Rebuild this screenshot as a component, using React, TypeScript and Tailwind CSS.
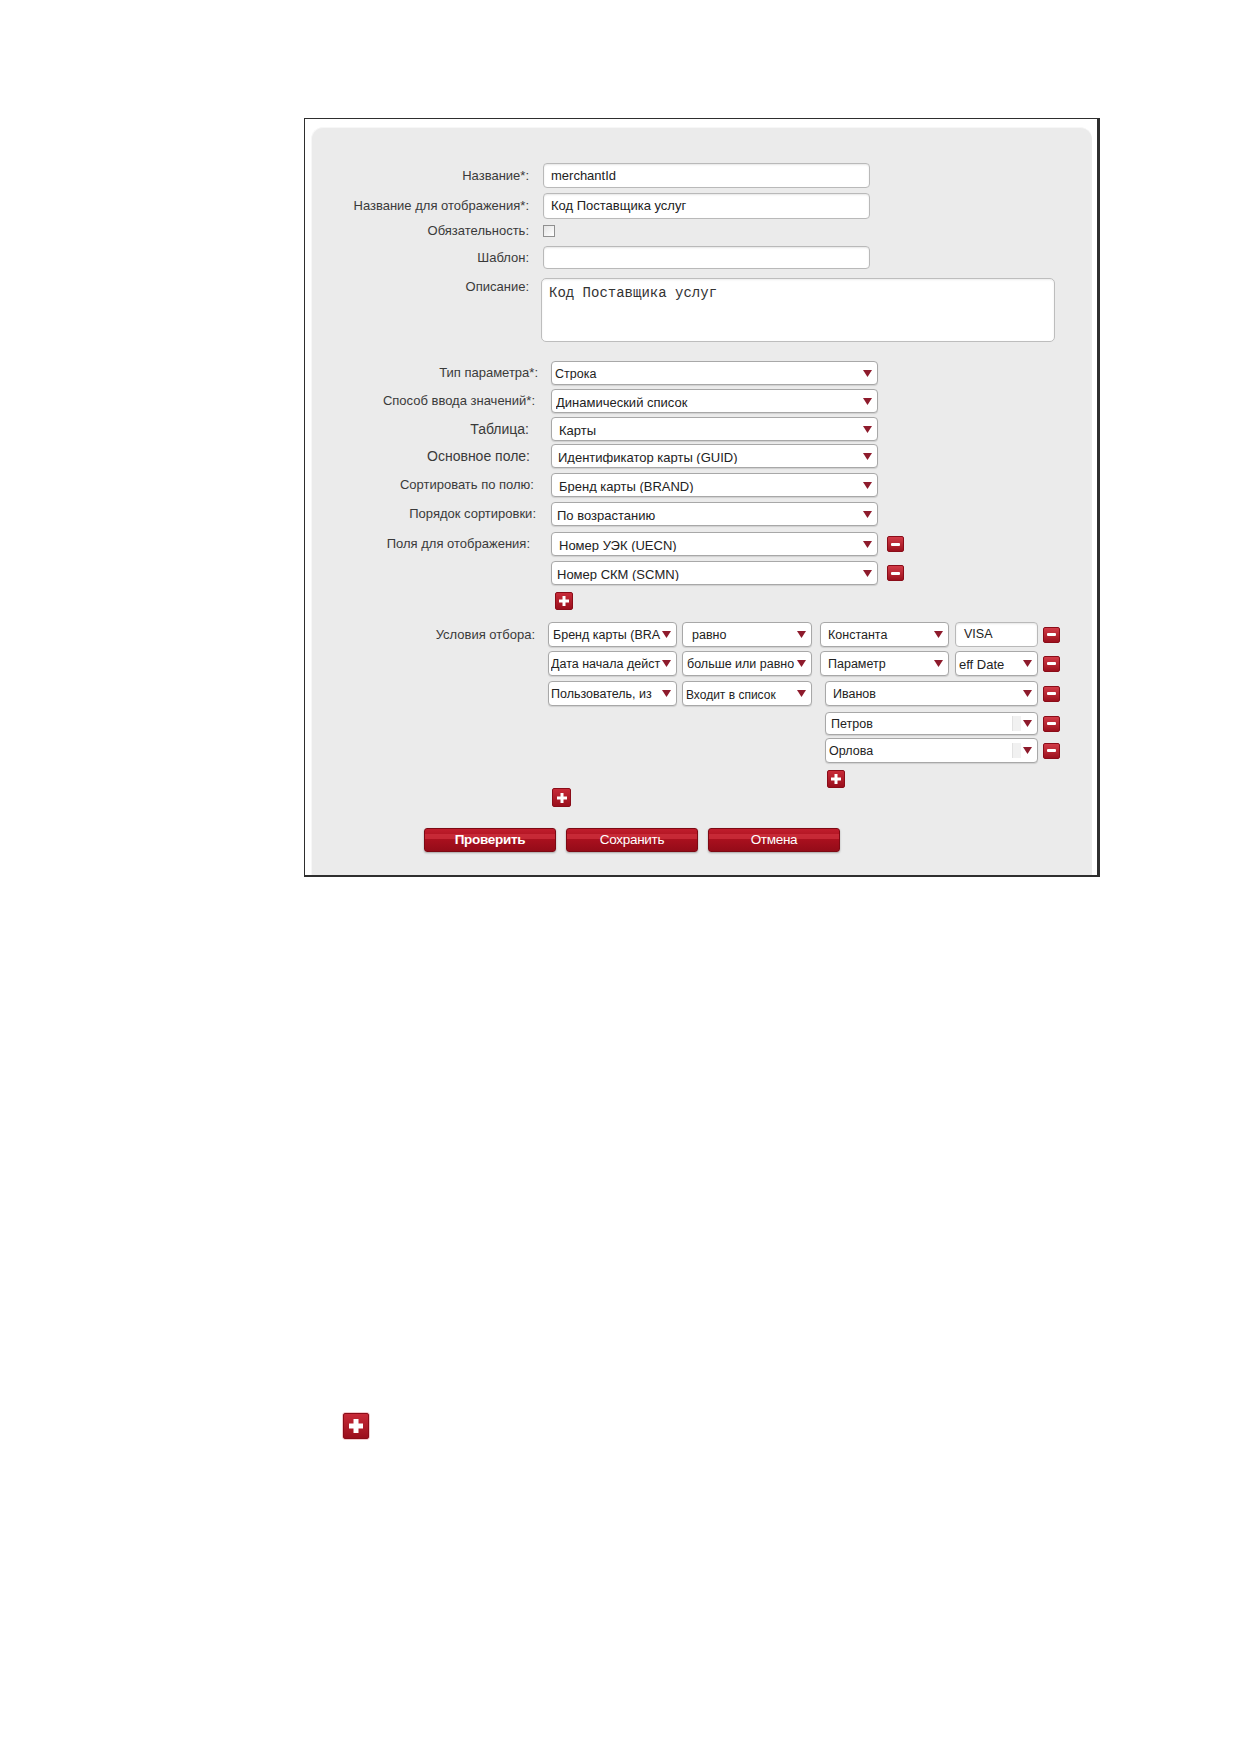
import React from 'react'

const font = "font-['Liberation_Sans',Arial,sans-serif]"

function Arrow() {
  return (
    <svg width="9" height="7" viewBox="0 0 9 7" className="shrink-0">
      <path d="M0 0 H9 L4.5 7 Z" fill="#8e1b2c" />
    </svg>
  )
}

function Select({ value, w, h = 24, pl = 4, text = 'text-[13px]', scroll = false }: { value: string; w: number; h?: number; pl?: number; text?: string; scroll?: boolean }) {
  return (
    <div
      className={`flex items-center bg-white border border-[#a8a8a8] rounded-[4px] shadow-[0_1px_1px_rgba(0,0,0,0.12)] pr-[5px] ${text} text-[#222]`}
      style={{ width: w, height: h, paddingLeft: pl }}
    >
      <span className="flex-1 min-w-0 overflow-hidden whitespace-nowrap leading-none pt-[2px]">{value}</span>
      {scroll && <span className="w-[9px] h-[15px] bg-[#f1f1f1] border-l border-[#e2e2e2] mr-[2px]" />}
      <Arrow />
    </div>
  )
}

function Input({ value = '', w, h = 25, pl = 7, text = 'text-[13px]' }: { value?: string; w: number; h?: number; pl?: number; text?: string }) {
  return (
    <div
      className={`flex items-center bg-white border border-[#b9b9b9] rounded-[4px] shadow-[inset_0_1px_2px_rgba(0,0,0,0.1)] ${text} text-[#222]`}
      style={{ width: w, height: h, paddingLeft: pl }}
    >
      {value}
    </div>
  )
}

function Minus() {
  return (
    <div className="w-[17px] h-[16px] shrink-0 rounded-[2px] bg-gradient-to-b from-[#d23a47] to-[#9c0f1d] border border-[#8a0c18] flex items-center justify-center">
      <span className="w-[9px] h-[3px] bg-white rounded-[1px]" />
    </div>
  )
}

function Plus({ size = 18, bar = 3, len = 10 }: { size?: number; bar?: number; len?: number }) {
  return (
    <div
      className="relative shrink-0 rounded-[2px] bg-gradient-to-b from-[#c82a38] to-[#9a0e1c] border border-[#8a0c18]"
      style={{ width: size, height: size }}
    >
      <span className="absolute bg-white left-1/2 top-1/2 -translate-x-1/2 -translate-y-1/2" style={{ width: len, height: bar }} />
      <span className="absolute bg-white left-1/2 top-1/2 -translate-x-1/2 -translate-y-1/2" style={{ width: bar, height: len }} />
    </div>
  )
}

function ActionButton({ label, bold = false }: { label: string; bold?: boolean }) {
  return (
    <div className="relative w-[132px] h-[24px] rounded-[3px] border border-[#7d0913] bg-gradient-to-b from-[#c01d2c] via-[#a8101e] to-[#940b18] shadow-[0_1px_2px_rgba(0,0,0,0.3)] flex items-center justify-center overflow-hidden">
      <span className="absolute left-0 right-0 top-[5px] h-[5px] bg-[#d0323f] opacity-70" />
      <span className={`relative text-white text-[13.5px] tracking-[-0.3px] ${bold ? 'font-bold' : ''}`}>{label}</span>
    </div>
  )
}

function Row({ label, lw, gap, h, mt, size = 'text-[13px]', children }: { label: string; lw: number; gap: number; h: number; mt: number; size?: string; children: React.ReactNode }) {
  return (
    <div className="flex items-center" style={{ height: h, marginTop: mt }}>
      <div className={`text-right text-[#3a3a3a] ${size} shrink-0 whitespace-nowrap`} style={{ width: lw, marginRight: gap }}>
        {label}
      </div>
      {children}
    </div>
  )
}

export default function App() {
  return (
    <div className={`w-[1239px] min-h-[1752px] bg-white ${font} overflow-hidden`}>
      <div className="ml-[304px] mt-[118px] w-[796px] h-[759px] border-l border-t border-r-[3px] border-b-[2px] border-[#2e2e2e] bg-white pt-[8px] pl-[6px] pr-[5px] flex">
        <div className="flex-1 bg-[#ebebeb] rounded-t-[12px] border-t border-l border-[#f7f7f7] pt-[35px]">
          {/* main properties */}
          <Row label="Название*:" lw={217} gap={14} h={25} mt={0}>
            <Input value="merchantId" w={327} />
          </Row>
          <Row label="Название для отображения*:" lw={217} gap={14} h={26} mt={5}>
            <Input value="Код Поставщика услуг" w={327} h={26} />
          </Row>
          <Row label="Обязательность:" lw={217} gap={14} h={12} mt={6}>
            <div className="w-[12px] h-[12px] border border-[#8f8f8f] bg-gradient-to-br from-[#e4e4e4] to-white" />
          </Row>
          <Row label="Шаблон:" lw={217} gap={14} h={23} mt={9}>
            <Input w={327} h={23} />
          </Row>
          <div className="flex items-start mt-[9px]">
            <div className="w-[217px] mr-[12px] text-right text-[13px] text-[#3a3a3a] -mt-[1px]">Описание:</div>
            <div className="w-[514px] h-[64px] bg-white border border-[#bdbdbd] rounded-[5px] shadow-[inset_0_1px_2px_rgba(0,0,0,0.08)] px-[7px] pt-[4px] font-['Liberation_Mono',monospace] text-[14px] text-[#333]">
              Код Поставщика услуг
            </div>
          </div>

          {/* lookup settings */}
          <Row label="Тип параметра*:" lw={226} gap={13} h={24} mt={19}>
            <Select value="Строка" w={327} pl={3} text="text-[12.5px]" />
          </Row>
          <Row label="Способ ввода значений*:" lw={223} gap={16} h={24} mt={4}>
            <Select value="Динамический список" w={327} pl={4} />
          </Row>
          <Row label="Таблица:" lw={217} gap={22} h={24} mt={4} size="text-[14px]">
            <Select value="Карты" w={327} pl={7} />
          </Row>
          <Row label="Основное поле:" lw={218} gap={21} h={24} mt={3} size="text-[14px]">
            <Select value="Идентификатор карты (GUID)" w={327} pl={6} />
          </Row>
          <Row label="Сортировать по полю:" lw={222} gap={17} h={24} mt={5}>
            <Select value="Бренд карты (BRAND)" w={327} pl={7} />
          </Row>
          <Row label="Порядок сортировки:" lw={224} gap={15} h={24} mt={5}>
            <Select value="По возрастанию" w={327} pl={5} />
          </Row>
          <Row label="Поля для отображения:" lw={218} gap={21} h={24} mt={6}>
            <Select value="Номер УЭК  (UECN)" w={327} pl={7} />
            <div className="ml-[9px]"><Minus /></div>
          </Row>
          <div className="flex items-center h-[24px] mt-[5px] pl-[239px]">
            <Select value="Номер СКМ (SCMN)" w={327} pl={5} />
            <div className="ml-[9px]"><Minus /></div>
          </div>
          <div className="mt-[7px] pl-[243px]">
            <Plus />
          </div>

          {/* filter conditions */}
          <div className="flex items-start mt-[12px]">
            <div className="w-[223px] mr-[13px] h-[25px] flex items-center justify-end text-[13px] text-[#3a3a3a]">Условия отбора:</div>
            <div className="flex flex-col">
              <div className="flex items-center h-[25px] gap-[5px]">
                <Select value="Бренд карты (BRA" w={129} h={25} pl={4} text="text-[12.5px]" />
                <Select value="равно" w={130} h={25} pl={9} text="text-[12.5px]" />
                <div className="ml-[3px]"><Select value="Константа" w={129} h={25} pl={7} text="text-[12.5px]" /></div>
                <div className="ml-[1px]"><Input value="VISA" w={83} h={25} pl={8} text="text-[12.5px]" /></div>
                <Minus />
              </div>
              <div className="flex items-center h-[25px] gap-[5px] mt-[4px]">
                <Select value="Дата начала дейст" w={129} h={25} pl={2} text="text-[12.5px]" />
                <Select value="больше или равно" w={130} h={25} pl={4} text="text-[12.5px]" />
                <div className="ml-[3px]"><Select value="Параметр" w={129} h={25} pl={7} text="text-[12.5px]" /></div>
                <div className="ml-[1px]"><Select value="eff  Date" w={83} h={25} pl={3} /></div>
                <Minus />
              </div>
              <div className="flex items-start mt-[5px]">
                <Select value="Пользователь, из" w={129} h={25} pl={2} text="text-[12.5px]" />
                <div className="ml-[5px]"><Select value="Входит в список" w={130} h={25} pl={3} text="text-[12px]" /></div>
                <div className="ml-[13px] flex flex-col">
                  <div className="flex items-center gap-[5px] h-[25px]">
                    <Select value="Иванов" w={213} h={25} pl={7} text="text-[12.5px]" />
                    <Minus />
                  </div>
                  <div className="flex items-center gap-[5px] h-[23px] mt-[6px]">
                    <Select value="Петров" w={213} h={23} pl={5} text="text-[12.5px]" scroll />
                    <Minus />
                  </div>
                  <div className="flex items-center gap-[5px] h-[25px] mt-[3px]">
                    <Select value="Орлова" w={213} h={25} pl={3} text="text-[12.5px]" scroll />
                    <Minus />
                  </div>
                  <div className="mt-[7px] ml-[2px]">
                    <Plus />
                  </div>
                </div>
              </div>
              <div className="ml-[4px]">
                <Plus size={19} />
              </div>
            </div>
          </div>

          <div className="flex gap-[10px] mt-[21px] ml-[112px]">
            <ActionButton label="Проверить" bold />
            <ActionButton label="Сохранить" />
            <ActionButton label="Отмена" />
          </div>
        </div>
      </div>

      <div className="ml-[342px] mt-[535px]">
        <div className="p-[1px] rounded-[4px] bg-[#f4c9cd] w-fit">
          <Plus size={26} bar={5} len={14} />
        </div>
      </div>
    </div>
  )
}
